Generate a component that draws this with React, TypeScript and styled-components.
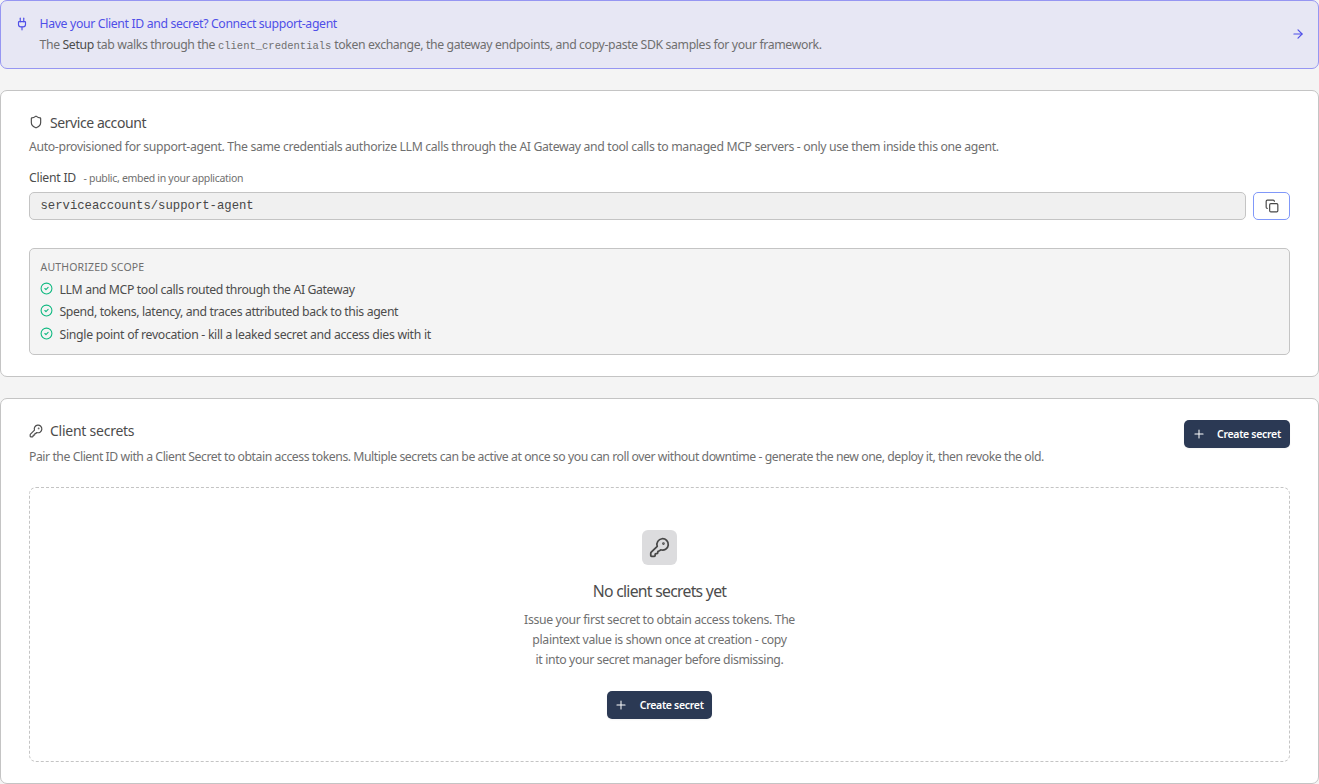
import React from "react";
import styled, { createGlobalStyle } from "styled-components";
import { ArrowRight, CircleCheck, Copy, KeyRound, Plug, Plus, Shield } from "lucide-react";

const Global = createGlobalStyle`
  *, *::before, *::after { box-sizing: border-box; }
  html { font-size: 14px; }
  body {
    margin: 0;
    background: #f4f4f4;
    color: #4c4c4c;
    font-family: "Noto Sans", sans-serif;
    font-size: 12.25px;
  }
  h2, h3, p, ul { margin: 0; padding: 0; font-weight: 400; }
  svg { flex: none; display: block; }
`;

const Page = styled.main`
  display: flex;
  flex-direction: column;
  gap: 21px;
`;

const Banner = styled.section`
  display: flex;
  gap: 10.5px;
  height: 69px;
  padding: 14px 13px 14px 14px;
  border: 1px solid #9696f2;
  border-radius: 7px;
  background: #e7e7f4;
  color: #4f4fe8;
  > svg:first-child { margin-top: 2px; }
  > svg:last-child { align-self: center; margin-bottom: 1px; }
`;

const BannerBody = styled.div`
  flex: 1;
  display: flex;
  flex-direction: column;
  gap: 3.5px;
`;

const Line = styled.p<{ $tone?: string; $track?: number; $size?: number; $lh?: number }>`
  font-size: ${(p) => p.$size ?? 12.25}px;
  line-height: ${(p) => p.$lh ?? 17.5}px;
  color: ${(p) => p.$tone ?? "#6f6f6f"};
  letter-spacing: ${(p) => p.$track ?? -0.35}px;
  white-space: nowrap;
`;

const Strong = styled.span`
  color: #4c4c4c;
`;

const Code = styled.code`
  font-family: "Liberation Mono", monospace;
  font-size: 10.5px;
  letter-spacing: 0;
`;

const Card = styled.section<{ $height: number }>`
  height: ${(p) => p.$height}px;
  padding: 21px 28px;
  border: 1px solid #c4c4c4;
  border-radius: 7px;
  background: #fff;
`;

const Heading = styled.h2<{ $track: number; $lift?: number }>`
  display: flex;
  align-items: center;
  gap: 7px;
  height: 21px;
  margin-bottom: 4px;
  font-size: 14px;
  line-height: 21px;
  letter-spacing: ${(p) => p.$track}px;
  color: #4c4c4c;
  svg { margin-bottom: ${(p) => p.$lift ?? 0}px; }
`;

const FieldLabel = styled.div`
  display: flex;
  align-items: baseline;
  gap: 7.5px;
  margin-top: 12px;
`;

const FieldRow = styled.div`
  display: flex;
  gap: 7px;
  margin-top: 4px;
`;

const Field = styled.div`
  flex: 1;
  height: 28px;
  padding: 0 10.5px;
  border: 1px solid #c4c4c4;
  border-radius: 5px;
  background: #f0f0f0;
  font: 12.25px/26px "Liberation Mono", monospace;
  color: #474747;
`;

const CopyButton = styled.button`
  display: flex;
  align-items: center;
  justify-content: center;
  width: 37px;
  height: 28px;
  padding: 0;
  border: 1px solid #8098f9;
  border-radius: 5px;
  background: #fff;
  color: #474747;
`;

const Scope = styled.div`
  height: 107px;
  margin-top: 28px;
  padding: 10px 10.5px;
  border: 1px solid #c4c4c4;
  border-radius: 5px;
  background: #f4f4f4;
`;

const ScopeList = styled.ul`
  display: flex;
  flex-direction: column;
  gap: 3.5px;
  margin-top: 3.6px;
  list-style: none;
`;

const ScopeItem = styled.li`
  display: flex;
  gap: 6.5px;
  height: 19.25px;
  svg { color: #10b981; margin: 2.1px 0 0 -0.5px; }
`;

const CardHeader = styled.header`
  display: flex;
  justify-content: space-between;
  align-items: flex-start;
`;

const PrimaryButton = styled.button<{ $width: number }>`
  display: flex;
  align-items: center;
  gap: 11.5px;
  width: ${(p) => p.$width}px;
  height: 28px;
  padding: 0 7.5px;
  border: 0;
  border-radius: 5px;
  background: #2b3954;
  color: #fff;
  font: 600 10.5px/14px "Noto Sans", sans-serif;
  letter-spacing: -0.3px;
  white-space: nowrap;
  box-shadow: 0 1px 2px rgba(0, 0, 0, 0.05);
`;

const Empty = styled.div`
  display: flex;
  flex-direction: column;
  align-items: center;
  height: 275px;
  margin-top: 18px;
  padding-top: 42px;
  border: 1px dashed #c4c4c4;
  border-radius: 7px;
  text-align: center;
`;

const IconTile = styled.div`
  display: flex;
  align-items: center;
  justify-content: center;
  width: 35px;
  height: 35px;
  border-radius: 6px;
  background: #dcdcde;
  color: #474747;
`;

const EmptyTitle = styled.h3`
  margin-top: 14px;
  font-size: 15.75px;
  line-height: 24px;
  letter-spacing: -0.72px;
`;

const EmptyText = styled.div`
  margin: 7px 0 21px;
`;

function CreateSecret({ width }: { width: number }) {
  return (
    <PrimaryButton type="button" $width={width}>
      <Plus size={14} strokeWidth={1.75} />
      <span>Create secret</span>
    </PrimaryButton>
  );
}

const scopes = [
  { text: "LLM and MCP tool calls routed through the AI Gateway", track: -0.37 },
  { text: "Spend, tokens, latency, and traces attributed back to this agent", track: -0.36 },
  { text: "Single point of revocation - kill a leaked secret and access dies with it", track: -0.3 },
];

export default function App() {
  return (
    <>
      <Global />
      <Page>
        <Banner>
          <Plug size={14} />
          <BannerBody>
            <Line $tone="#4f4fe8">Have your Client ID and secret? Connect support-agent</Line>
            <Line $track={-0.37}>
              The <Strong>Setup</Strong> tab walks through the <Code>client_credentials</Code> token exchange, the
              gateway endpoints, and copy-paste SDK samples for your framework.
            </Line>
          </BannerBody>
          <ArrowRight size={14} />
        </Banner>

        <Card $height={287}>
          <Heading $track={-0.43} $lift={2}>
            <Shield size={14} />
            <span>Service account</span>
          </Heading>
          <Line $lh={20} $track={-0.345}>
            Auto-provisioned for support-agent. The same credentials authorize LLM calls through the AI Gateway and tool
            calls to managed MCP servers - only use them inside this one agent.
          </Line>
          <FieldLabel>
            <Line $tone="#4c4c4c" $track={-0.25}>Client ID</Line>
            <Line $size={10.5} $track={-0.31}>- public, embed in your application</Line>
          </FieldLabel>
          <FieldRow>
            <Field>serviceaccounts/support-agent</Field>
            <CopyButton type="button" aria-label="Copy client ID">
              <Copy size={14} />
            </CopyButton>
          </FieldRow>
          <Scope>
            <Line $size={10.5} $track={0.17}>AUTHORIZED SCOPE</Line>
            <ScopeList>
              {scopes.map(({ text, track }) => (
                <ScopeItem key={text}>
                  <CircleCheck size={13} />
                  <Line $tone="#4c4c4c" $lh={19.25} $track={track}>
                    {text}
                  </Line>
                </ScopeItem>
              ))}
            </ScopeList>
          </Scope>
        </Card>

        <Card $height={386}>
          <CardHeader>
            <div>
              <Heading $track={-0.25}>
                <KeyRound size={14} />
                <span>Client secrets</span>
              </Heading>
              <Line $lh={24} $track={-0.457}>
                Pair the Client ID with a Client Secret to obtain access tokens. Multiple secrets can be active at once
                so you can roll over without downtime - generate the new one, deploy it, then revoke the old.
              </Line>
            </div>
            <CreateSecret width={106} />
          </CardHeader>
          <Empty>
            <IconTile>
              <KeyRound size={21} />
            </IconTile>
            <EmptyTitle>No client secrets yet</EmptyTitle>
            <EmptyText>
              <Line $lh={20}>Issue your first secret to obtain access tokens. The</Line>
              <Line $lh={20} $track={-0.33}>plaintext value is shown once at creation - copy</Line>
              <Line $lh={20} $track={-0.37}>it into your secret manager before dismissing.</Line>
            </EmptyText>
            <CreateSecret width={105.5} />
          </Empty>
        </Card>
      </Page>
    </>
  );
}
